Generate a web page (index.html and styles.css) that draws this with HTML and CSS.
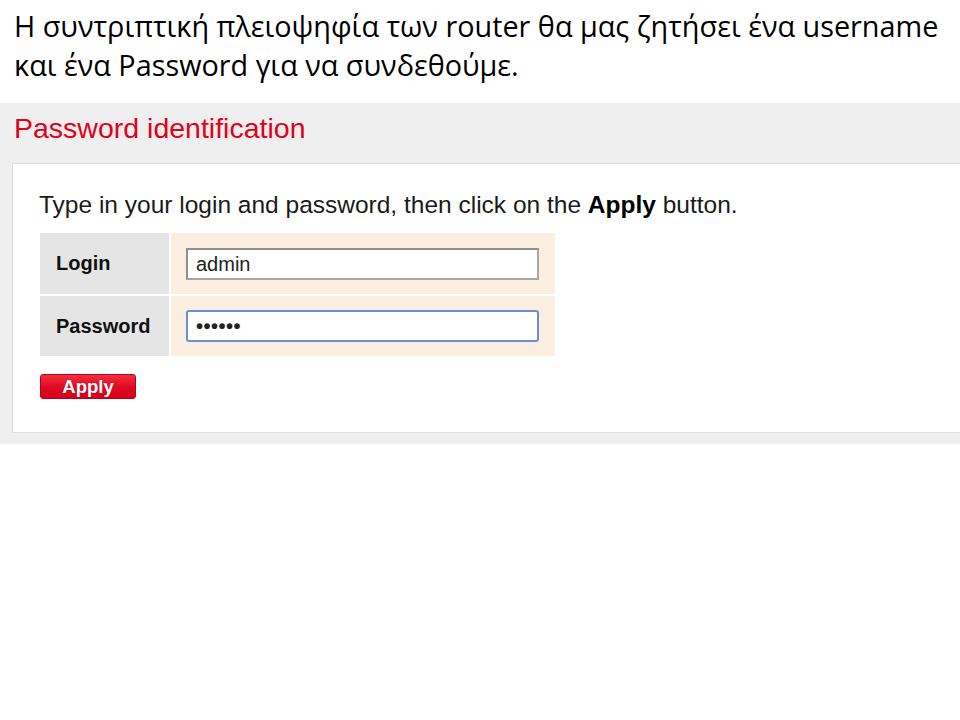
FILE: index.html
```html
<!DOCTYPE html>
<html lang="el">
<head>
<meta charset="utf-8">
<title>Password identification</title>
<link rel="stylesheet" href="styles.css">
</head>
<body>
<p class="caption">Η συντριπτική πλειοψηφία των router θα μας ζητήσει ένα username<br>και ένα Password για να συνδεθούμε.</p>
<section class="band">
  <h1 class="title">Password identification</h1>
  <div class="panel">
    <p class="intro">Type in your login and password, then click on the <b>Apply</b> button.</p>
    <div class="form">
      <div class="label">Login</div>
      <div class="value"><div class="field">admin</div></div>
      <div class="label">Password</div>
      <div class="value"><div class="field focus dots">••••••</div></div>
    </div>
    <div class="button">Apply</div>
  </div>
</section>
</body>
</html>
```
FILE: styles.css
```css
html, body {
  margin: 0;
  padding: 0;
  background: #ffffff;
}

.caption {
  margin: 0;
  padding: 6px 0 0 14px;
  height: 96px;
  box-sizing: border-box;
  font-family: "Open Sans", "Noto Sans", "DejaVu Sans", sans-serif;
  font-size: 28.8px;
  line-height: 39px;
  color: #000;
  white-space: nowrap;
}

.band {
  margin-top: 7px;
  background: #efefef;
  padding: 0 0 11px 12px;
  overflow: hidden;
}

.title {
  margin: 0 0 10px 0;
  padding-left: 2px;
  font-family: "Liberation Sans", Arial, sans-serif;
  font-weight: normal;
  font-size: 28.5px;
  line-height: 50px;
  color: #e2001a;
}

.panel {
  background: #ffffff;
  border: 1px solid #e0e0e0;
  border-right: none;
  padding: 27px 0 32px 26px;
  height: 270px;
  box-sizing: border-box;
  font-family: "Liberation Sans", Arial, sans-serif;
}

.intro {
  margin: 0 0 14px 0;
  font-size: 24.5px;
  line-height: 28px;
  color: #1a1a1a;
}

.intro b {
  color: #000;
}

.form {
  display: grid;
  grid-template-columns: 129px 384px;
  grid-template-rows: 61px 60px;
  gap: 2px;
  margin-left: 1px;
  width: max-content;
}

.label {
  background: #e5e5e5;
  display: flex;
  align-items: center;
  padding-left: 16px;
  font-size: 20px;
  font-weight: bold;
  color: #111;
}

.value {
  background: #faeee1;
  display: flex;
  align-items: center;
  padding-left: 15px;
}

.field {
  width: 353px;
  height: 32px;
  box-sizing: border-box;
  border: 2px solid #a6a6a6;
  border-top-color: #8f8f8f;
  border-left-color: #8f8f8f;
  background: #fff;
  padding-left: 8px;
  font-size: 20px;
  line-height: 28px;
  color: #222;
}

.field.focus {
  border: 2px solid #6b8fd2;
  border-radius: 3px;
}

.dots {
  font-weight: bold;
  letter-spacing: 0.5px;
}

.button {
  margin: 18px 0 0 1px;
  width: 96px;
  height: 25px;
  box-sizing: border-box;
  border: 1px solid #b9001b;
  border-radius: 3px;
  background: linear-gradient(#f2303f, #e20a24 50%, #d5001b);
  color: #fff;
  font-size: 18.5px;
  font-weight: bold;
  line-height: 23px;
  text-align: center;
  text-shadow: 0 0 1px rgba(120, 0, 0, 0.5);
}
```
